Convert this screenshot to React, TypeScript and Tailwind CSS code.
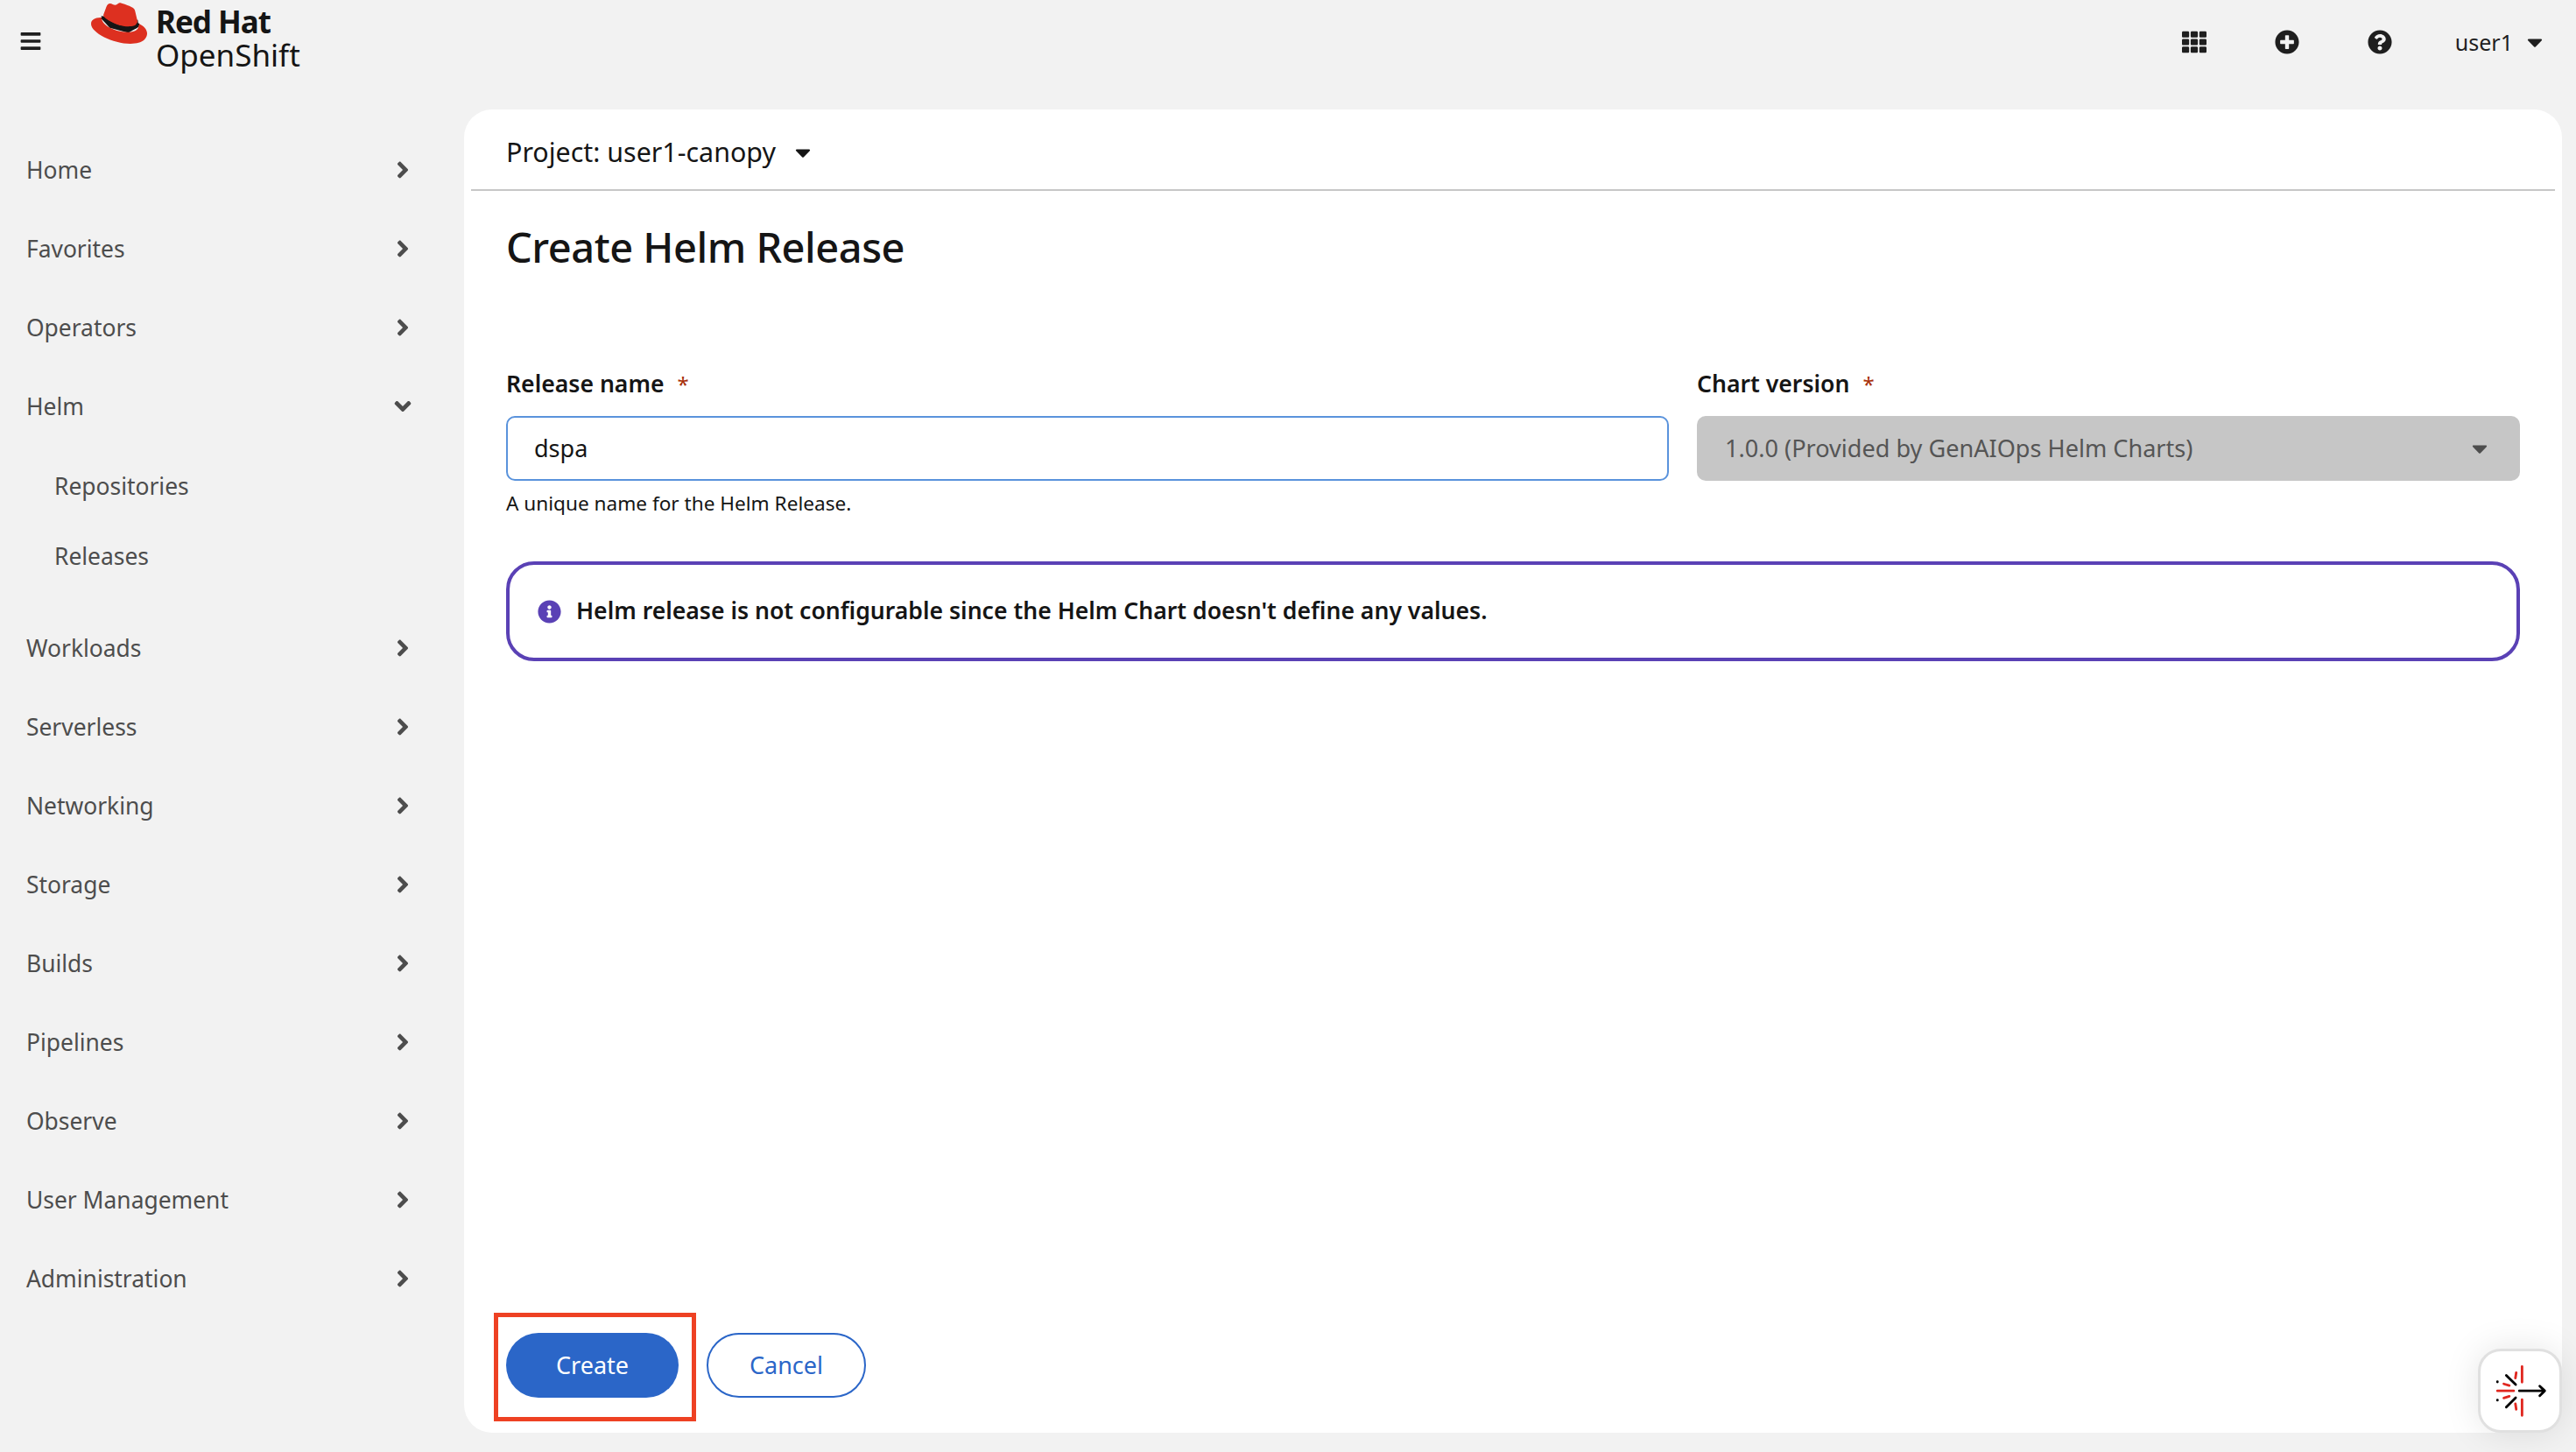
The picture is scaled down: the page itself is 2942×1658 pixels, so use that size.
import { FaBars, FaTh, FaPlusCircle, FaQuestionCircle, FaAngleRight, FaAngleDown, FaCaretDown, FaInfoCircle } from "react-icons/fa";

const before = ["Home", "Favorites", "Operators"];
const after = ["Workloads", "Serverless", "Networking", "Storage", "Builds", "Pipelines", "Observe", "User Management", "Administration"];

function NavItem({ label, open }: { label: string; open?: boolean }) {
  return (
    <div className="flex h-[90px] items-center justify-between pl-[30px] pr-[58px] text-[26.4px] text-[#4d4d4d]">
      <span className="pt-[2px]">{label}</span>
      {open ? <FaAngleDown className="h-[30px] w-[24px] text-[#4d4d4d]" /> : <FaAngleRight className="h-[30px] w-[24px] text-[#4d4d4d]" />}
    </div>
  );
}

function RedHatLogo() {
  return (
    <svg viewBox="0 2.4 24 18.7" preserveAspectRatio="none" className="mt-[2px] h-[48px] w-[64px] shrink-0">
      <path d="M4.3 8.7 20 10.5l.4 3-4.4 2.7-8-2.2-3.1-3.5z" fill="#151515" />
      <path
        fill="#dd3020"
        d="M16.009 13.386c1.577 0 3.86-.326 3.86-2.202a1.765 1.765 0 0 0-.04-.431l-.94-4.08c-.216-.898-.406-1.305-1.982-2.093-1.223-.625-3.888-1.658-4.676-1.658-.733 0-.947.946-1.822.946-.842 0-1.467-.706-2.255-.706-.757 0-1.25.515-1.63 1.576 0 0-1.06 2.99-1.197 3.424a.81.81 0 0 0-.028.245c0 1.162 4.577 4.974 10.71 4.974m4.101-1.435c.218 1.032.218 1.14.218 1.277 0 1.765-1.984 2.745-4.593 2.745-5.895.004-11.06-3.451-11.06-5.734a2.326 2.326 0 0 1 .19-.925C2.746 9.415 0 9.794 0 12.217c0 3.969 9.405 8.861 16.851 8.861 5.71 0 7.149-2.582 7.149-4.62 0-1.605-1.387-3.425-3.887-4.512"
      />
      <path d="M4.7 9.4C7 11.6 12 14.1 16 14.4c2.5.1 4-.9 4.1-2.4" fill="none" stroke="#151515" strokeWidth="1.2" />
    </svg>
  );
}

function Required({ label }: { label: string }) {
  return (
    <div className="flex h-[28px] items-center text-[26.6px] font-semibold text-[#151515]">
      <span>{label}</span>
      <span className="ml-[15px] text-[24px] font-normal text-[#a8310a]">*</span>
    </div>
  );
}

export default function App() {
  return (
    <div className="flex h-[1658px] w-[2942px] flex-col overflow-hidden bg-[#f2f2f2] font-['Noto_Sans',sans-serif] text-[#151515]">
      <header className="flex h-[125px] shrink-0 items-start">
        <div className="ml-[23px] mt-[34px] w-[81px] shrink-0">
          <FaBars className="h-[26px] w-[24px] text-[#1f1f1f]" />
        </div>
        <RedHatLogo />
        <div className="ml-[10px] mt-[5px] text-[#151515]">
          <div className="text-[35px] font-bold leading-[40px] tracking-[-1px]">Red Hat</div>
          <div className="text-[35px] leading-[36px]">OpenShift</div>
        </div>
        <div className="ml-auto mr-[38px] mt-[33px] flex items-center">
          <FaTh className="h-[28px] w-[28px] text-[#1f1f1f]" />
          <FaPlusCircle className="ml-[78px] h-[28px] w-[28px] text-[#1f1f1f]" />
          <FaQuestionCircle className="ml-[78px] h-[28px] w-[28px] text-[#1f1f1f]" />
          <span className="ml-[72px] text-[25px] leading-[30px] text-[#1f1f1f]">user1</span>
          <FaCaretDown className="ml-[16px] h-[28px] w-[18px] text-[#1f1f1f]" />
        </div>
      </header>
      <div className="flex min-h-0 flex-1">
        <nav className="w-[530px] shrink-0 pt-[24px]">
          {before.map((l) => (
            <NavItem key={l} label={l} />
          ))}
          <NavItem label="Helm" open />
          <div className="pb-[20px] pt-[6px] text-[26.4px] text-[#4d4d4d]">
            <div className="flex h-[80px] items-center pl-[62px] pt-[2px]">Repositories</div>
            <div className="flex h-[80px] items-center pl-[62px] pt-[2px]">Releases</div>
          </div>
          {after.map((l) => (
            <NavItem key={l} label={l} />
          ))}
        </nav>
        <main className="relative mb-[22px] mr-[16px] flex flex-1 flex-col rounded-[32px] bg-white">
          <div className="mx-[8px] flex h-[93px] shrink-0 items-center border-b-2 border-[#c7c7c7] pl-[40px] pt-[7px]">
            <span className="text-[30.4px] text-[#151515]">Project: user1-canopy</span>
            <FaCaretDown className="ml-[21px] h-[28px] w-[20px] text-[#151515]" />
          </div>
          <div className="flex flex-1 flex-col pl-[48px] pr-[48px]">
            <h1 className="mt-[32px] text-[47px] font-medium leading-[64px] tracking-[-0.5px] text-[#151515]">Create Helm Release</h1>
            <div className="mt-[111px] flex gap-[32px]">
              <div className="w-[1328px]">
                <Required label="Release name" />
                <div className="mt-[22px] flex h-[74px] items-center rounded-[10px] border-2 border-[#5a93dc] pl-[30px] text-[27px] text-[#151515]">dspa</div>
                <div className="mt-[12px] text-[22.6px] leading-[28px] text-[#151515]">A unique name for the Helm Release.</div>
              </div>
              <div className="w-[940px]">
                <Required label="Chart version" />
                <div className="mt-[22px] flex h-[74px] items-center justify-between rounded-[10px] bg-[#c6c6c6] pl-[32px] pr-[36px] text-[27.1px] text-[#555555]">
                  <span>1.0.0 (Provided by GenAIOps Helm Charts)</span>
                  <FaCaretDown className="h-[28px] w-[20px] text-[#4d4d4d]" />
                </div>
              </div>
            </div>
            <div className="mt-[52px] flex h-[114px] items-center rounded-[32px] border-4 border-[#5a41b5] pl-[32px]">
              <FaInfoCircle className="h-[27px] w-[27px] text-[#5a41b5]" />
              <span className="ml-[17px] text-[26.6px] font-semibold text-[#151515]">Helm release is not configurable since the Helm Chart doesn't define any values.</span>
            </div>
            <div className="mb-[40px] mt-auto flex gap-[32px]">
              <div className="relative">
                <button className="flex h-[74px] w-[197px] items-center justify-center rounded-full bg-[#2b66c8] text-[27px] text-white">Create</button>
                <div className="absolute -bottom-[27px] -left-[14px] -top-[23px] -right-[20px] border-[5px] border-[#ee4123]" />
              </div>
              <button className="flex h-[74px] w-[182px] items-center justify-center rounded-full border-2 border-[#2b66c8] text-[27px] text-[#2b66c8]">Cancel</button>
            </div>
          </div>
          <div className="absolute bottom-0 right-0 flex h-[96px] w-[96px] items-center justify-center rounded-[26px] border-[3px] border-[#e0e0e0] bg-white shadow-[0_0_40px_rgba(0,0,0,0.10)]">
            <svg viewBox="152 120 285 285" className="h-[96px] w-[96px]" fill="none" strokeLinecap="round" strokeWidth="9">
              <g stroke="#e0271f">
                <path d="M302 175V232M302 295V352M213 263H272" />
                <path d="M281 197L278 217M281 330L278 310M236 238L256 244M236 289L256 283" />
              </g>
              <g stroke="#000000">
                <path d="M292 263H384M366 246L384 263L366 281" strokeLinejoin="round" />
                <path d="M245 207L279 240M245 322L279 288" />
                <path d="M213 230V231M213 296V297" />
              </g>
            </svg>
          </div>
        </main>
      </div>
    </div>
  );
}
